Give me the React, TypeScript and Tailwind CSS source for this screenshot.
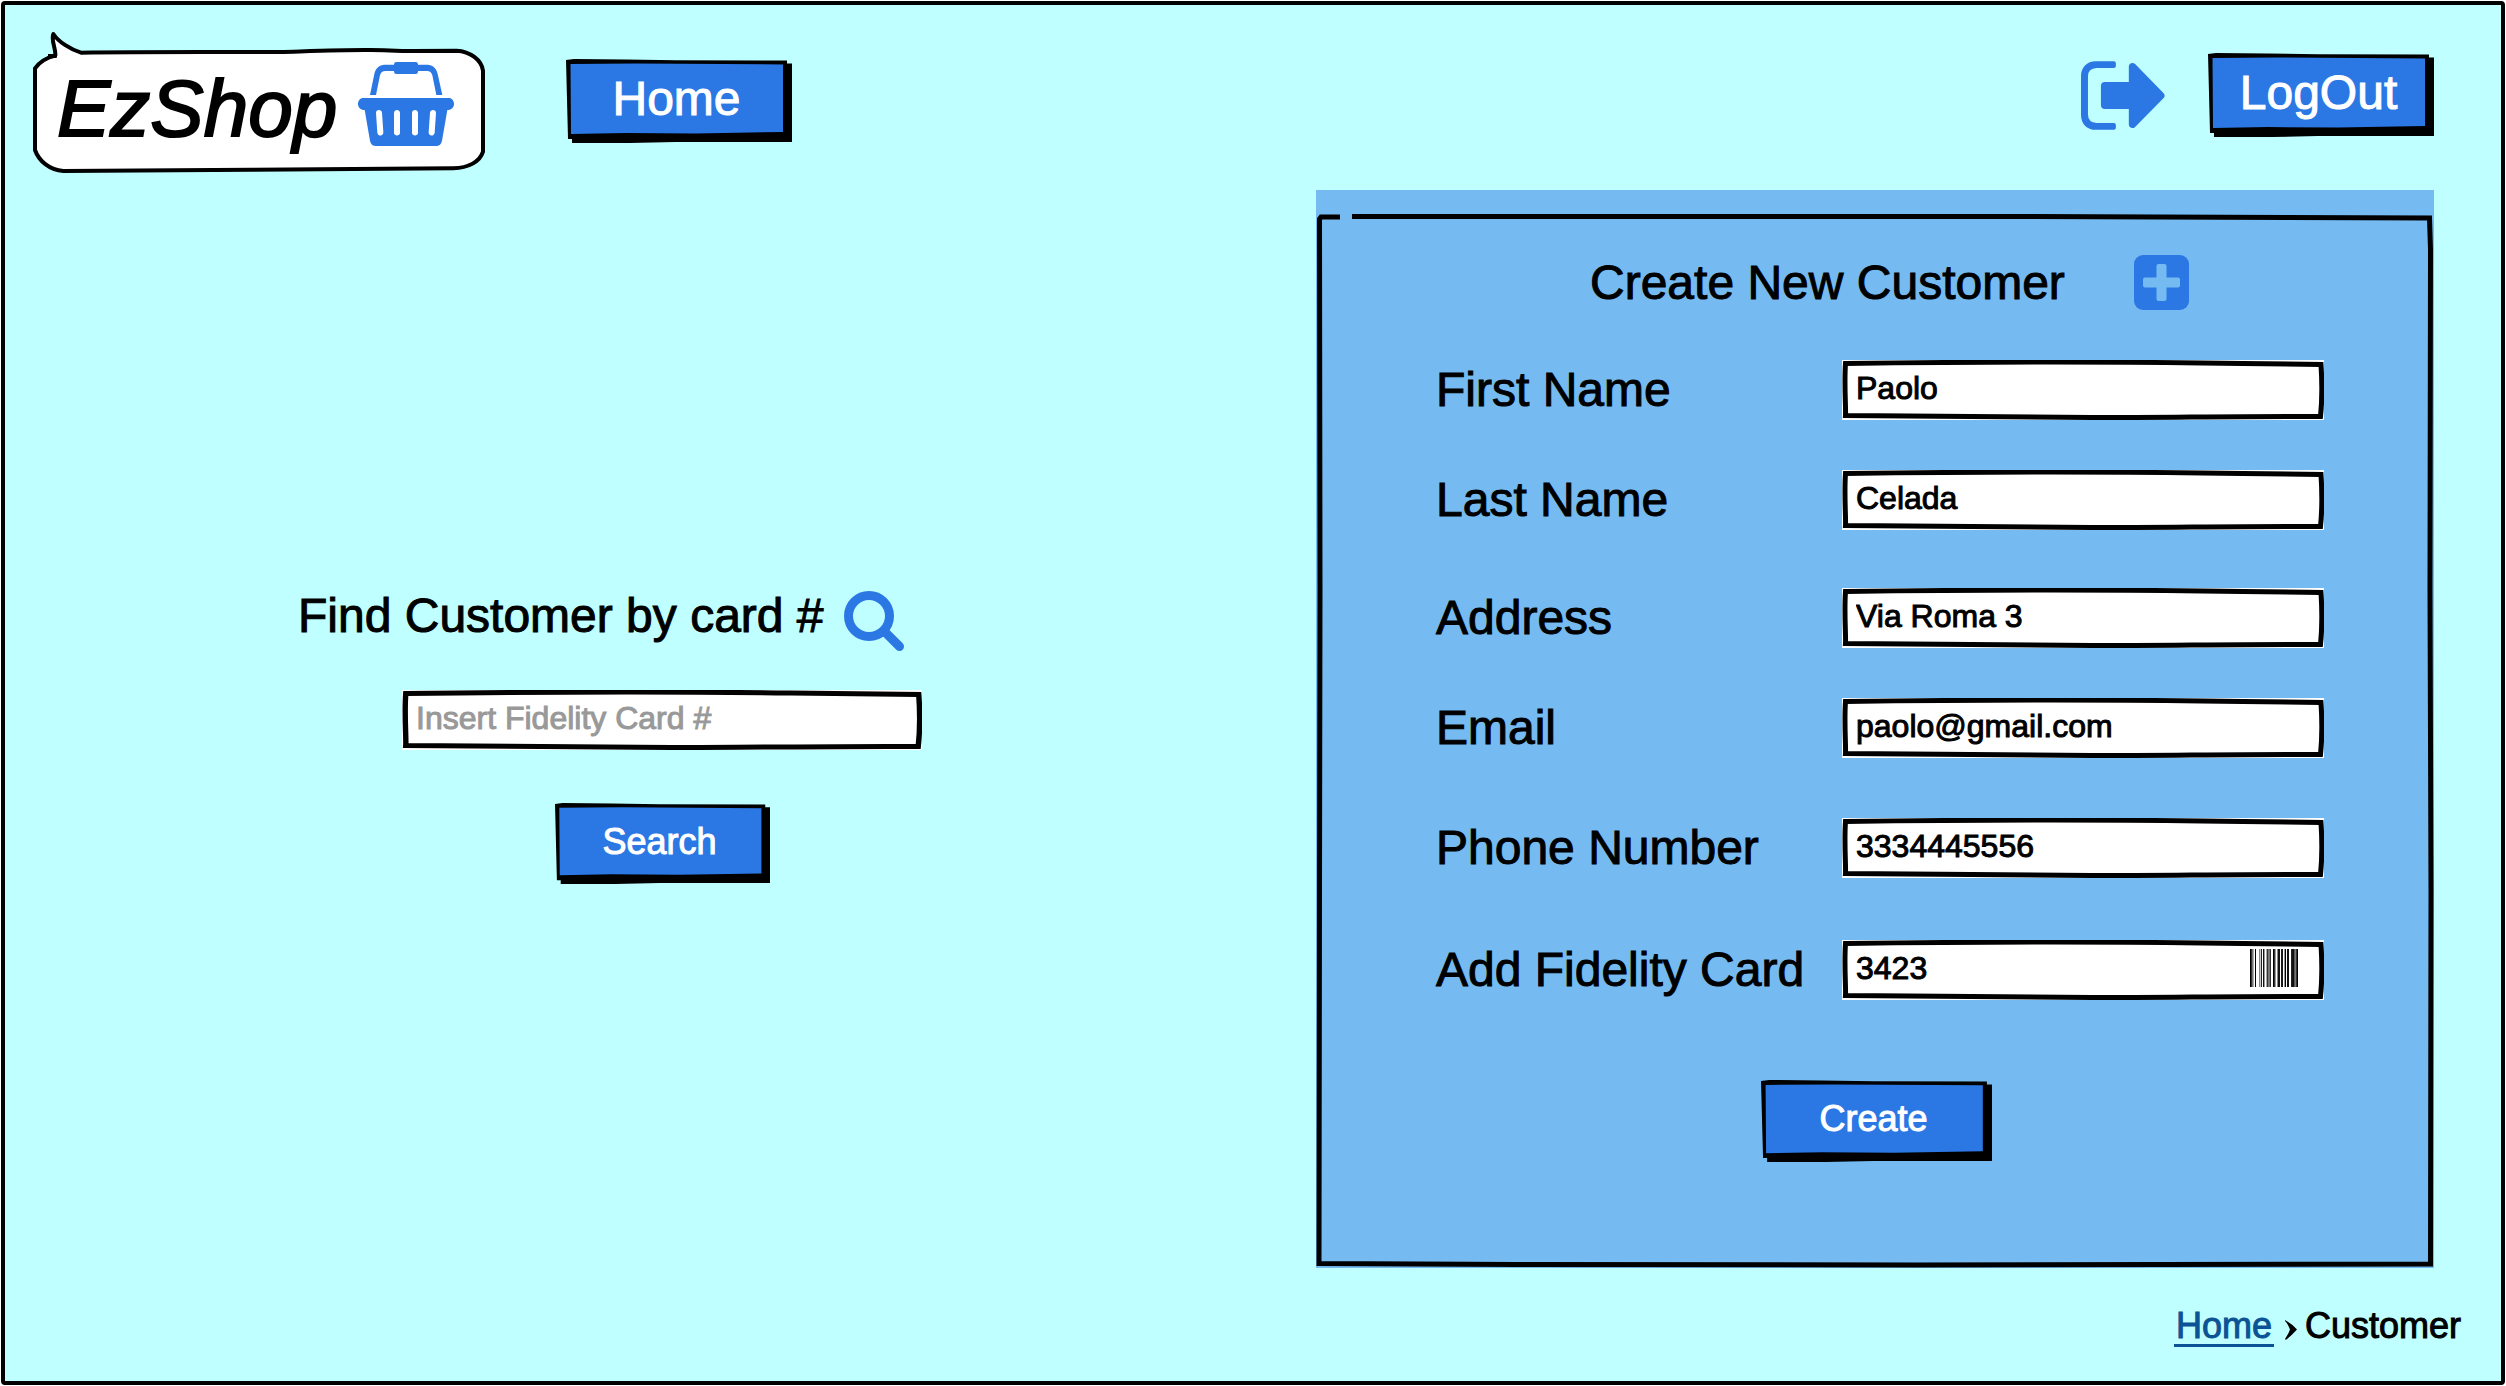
import React from 'react';

type FieldProps = {
  id: string;
  label: string;
  value: string;
  type: string;
  spacing: string;
  barcode?: boolean;
};

const FIELDS: FieldProps[] = [
  { id: 'first-name', label: 'First Name', value: 'Paolo', type: 'text', spacing: 'mt-[50px]' },
  { id: 'last-name', label: 'Last Name', value: 'Celada', type: 'text', spacing: 'mt-[50px]' },
  { id: 'address', label: 'Address', value: 'Via Roma 3', type: 'text', spacing: 'mt-[58px]' },
  { id: 'email', label: 'Email', value: 'paolo@gmail.com', type: 'text', spacing: 'mt-[50px]' },
  { id: 'phone', label: 'Phone Number', value: '3334445556', type: 'tel', spacing: 'mt-[60px]' },
  { id: 'card', label: 'Add Fidelity Card', value: '3423', type: 'text', spacing: 'mt-[62px]', barcode: true },
];

/* Hand-drawn outline around a text box */
function InputOutline() {
  return (
    <svg
      className="pointer-events-none absolute inset-0 h-full w-full"
      viewBox="0 0 482 60"
      preserveAspectRatio="none"
      aria-hidden="true"
    >
      <path
        d="M3.500 3.500 C120 2 280 2 360 3 C400 3.500 450 4 479 4.500 C480 20 480 42 478.500 56.500 C400 56 330 57.500 250 57.500 C160 57.500 80 56 3.500 55.500 C4 48 2 24 3.500 3.500 Z"
        fill="none"
        stroke="#000"
        strokeWidth="5"
        strokeLinejoin="miter"
      />
    </svg>
  );
}

function TextBox({ id, barcode, ...rest }: { id: string; barcode?: boolean } & React.InputHTMLAttributes<HTMLInputElement>) {
  return (
    <div className="relative w-full">
      <input
        id={id}
        className="block h-[60px] w-full bg-white pr-4 pb-1 pl-[14px] text-[32px] text-black outline-none [-webkit-text-stroke:1px] placeholder:text-[#999999] placeholder:opacity-100"
        {...rest}
      />
      <InputOutline />
      {barcode && <Barcode />}
    </div>
  );
}

function Barcode() {
  const bars: [number, number, string][] = [
    [0, 1, '#000'], [1, 1, '#333'], [2, 1, '#777'], [3, 1, '#aaa'], [5, 1, '#000'],
    [9, 1, '#888'], [10, 1, '#ccc'], [11, 1, '#222'], [13, 1, '#111'], [14, 1, '#999'],
    [16, 1, '#aaa'], [17, 1, '#333'], [18, 2, '#777'], [20, 1, '#333'], [23, 1, '#000'],
    [24, 1, '#333'], [25, 1, '#999'], [27, 1, '#888'], [28, 2, '#111'], [31, 2, '#1a1a1a'],
    [34, 1, '#999'], [35, 1, '#000'], [37, 2, '#111'], [41, 1, '#222'], [42, 2, '#111'],
    [44, 1, '#555'], [45, 1, '#777'], [46, 1, '#333'], [47, 1, '#000'],
  ];
  return (
    <svg
      className="pointer-events-none absolute top-[9px] right-[26px] h-[38px] w-12"
      viewBox="0 0 48 38"
      shapeRendering="crispEdges"
      aria-hidden="true"
    >
      {bars.map(([x, w, c]) => (
        <rect key={x} x={x} y="0" width={w} height="38" fill={c} />
      ))}
    </svg>
  );
}

/* Blue button with an uneven ink outline and a hard drop shadow */
function SketchButton({ className, children, type = 'button' }: { className: string; children: React.ReactNode; type?: 'button' | 'submit' }) {
  return (
    <button type={type} className={`relative flex cursor-pointer items-center justify-center pr-[5px] pb-1 text-white [-webkit-text-stroke:1px] ${className}`}>
      <svg
        className="absolute inset-0 h-full w-full"
        viewBox="0 0 226 84"
        preserveAspectRatio="none"
        aria-hidden="true"
      >
        <polygon points="6,79 6,84.500 40,84.500 110,83 226,83 226,4.500 219,4.500 219,79" fill="#000" />
        <polygon points="0,1 8,0 60,0.500 110,1.200 221,1.500 221,80 2,80" fill="#000" />
        <polygon points="4.500,5 70,4.500 217,5.500 217,73 130,74.500 60,74 5,75" fill="#2b78e4" />
      </svg>
      <span className="relative">{children}</span>
    </button>
  );
}

function Logo() {
  return (
    <div className="relative flex h-[143px] w-[454px] items-center justify-between pt-[3px] pr-8 pl-[25px]">
      <svg className="absolute inset-0 h-full w-full" viewBox="36 33 1362 429" aria-hidden="true">
        <path
          d="M45 145 C56 130 76 114 106 107 C108 85 92 60 100 42 C115 65 150 88 183 98 C400 95 650 97 780 96 C880 93 980 89 1050 90 C1100 90 1120 93 1180 93 L1310 92 C1350 94 1385 120 1389 152 L1389 395 C1380 425 1345 444 1300 445 C1000 448 450 450 130 453 C88 450 56 422 45 390 Z"
          fill="#fff"
          stroke="#000"
          strokeWidth="12"
          strokeLinejoin="round"
        />
        <path d="M84 108 L110 108" stroke="#000" strokeWidth="12" />
      </svg>
      <span className="relative pt-[10px] text-[80px] leading-[80px] italic [-webkit-text-stroke:2px]">EzShop</span>
      <svg className="relative h-[84px] w-24" viewBox="1014 126 288 252" fill="#2b78e4" aria-hidden="true">
        <path d="M1122 134 H1092 C1074 136 1066 148 1063 162 L1050 225 H1068 L1080 166 C1082 157 1088 153 1096 153 H1122 Z" />
        <path d="M1194 134 H1224 C1242 136 1250 148 1253 162 L1267 225 H1249 L1237 166 C1235 157 1229 153 1221 153 H1194 Z" />
        <rect x="1122" y="126" width="72" height="36" rx="7" />
        <path
          fillRule="evenodd"
          d="M1030 234 H1286 C1296 234 1302 242 1302 252 C1302 262 1295 270 1282 270 L1266 362 C1264 372 1258 378 1248 378 H1068 C1058 378 1052 372 1050 362 L1034 270 C1021 270 1014 262 1014 252 C1014 242 1020 234 1030 234 Z M1068 279 L1072 338 C1074 350 1091 349 1090 337 L1086 278 C1085 267 1067 268 1068 279 Z M1122 279 V338 C1122 349 1140 349 1140 338 V279 C1140 267 1122 267 1122 279 Z M1176 279 V338 C1176 349 1194 349 1194 338 V279 C1194 267 1176 267 1176 279 Z M1230 278 L1226 337 C1225 349 1242 350 1244 338 L1248 279 C1249 268 1231 267 1230 278 Z"
        />
      </svg>
    </div>
  );
}

function LogoutIcon() {
  return (
    <svg className="h-[69px] w-[84px]" viewBox="123 126 253 207" fill="#2b78e4" aria-hidden="true">
      <path d="M168 126 H222 Q228 126 228 132 V141 Q228 147 222 147 H170 Q144 148 144 172 V287 Q144 311 170 312 H222 Q228 312 228 318 V327 Q228 333 222 333 H168 C140 333 123 314 123 288 V171 C123 145 140 126 168 126 Z" />
      <path d="M195 189 H267 V142 C267 132 279 128 286 135 L372 223 Q378 230 372 237 L286 324 C279 331 267 327 267 317 V270 H195 Q183 270 183 258 V201 Q183 189 195 189 Z" />
    </svg>
  );
}

export default function App() {
  return (
    <div className="min-h-screen bg-white p-[1px] font-['Liberation_Sans',Arial,sans-serif] text-black [-webkit-text-stroke:1px]">
      <div className="flex min-h-[calc(100vh-2px)] flex-col rounded-[4px] border-4 border-black bg-[#c0ffff]">
        <header className="flex items-start justify-between pt-[26px] pr-[67px] pb-4 pl-[27px]">
          <nav className="flex items-center gap-20">
            <Logo />
            <SketchButton className="mb-1 h-[84px] w-[226px] text-[48px] leading-none">Home</SketchButton>
          </nav>
          <div className="mt-[22px] flex items-center gap-[43px]">
            <LogoutIcon />
            <SketchButton className="h-[84px] w-[226px] text-[48px] leading-none">LogOut</SketchButton>
          </div>
        </header>

        <main className="grid flex-1 grid-cols-[1311fr_1118fr] pr-[67px]">
          <section className="flex flex-col justify-center pt-[17px] pl-[290px]">
            <form className="flex w-[627px] flex-col" onSubmit={(e) => e.preventDefault()}>
              <div className="flex h-[60px] items-center gap-5 pl-[3px]">
                <label htmlFor="find-card" className="pb-[10px] text-[48px] leading-none whitespace-nowrap">
                  Find Customer by card #
                </label>
                <svg className="size-[60px] shrink-0" viewBox="0 0 60 60" fill="none" stroke="#2b78e4" aria-hidden="true">
                  <circle cx="25" cy="25" r="20.500" strokeWidth="9" />
                  <path d="M41 41 L55.500 55.500" strokeWidth="9" strokeLinecap="round" />
                </svg>
              </div>
              <div className="mt-[39px] flex w-[520px] flex-col items-center self-end">
                <TextBox id="find-card" type="text" placeholder="Insert Fidelity Card #" />
                <SketchButton type="submit" className="mt-[53px] h-[81px] w-[215px] text-[36px] leading-none">
                  Search
                </SketchButton>
              </div>
            </form>
          </section>

          <section className="relative bg-[#75bbf2] pt-[65px] pr-[110px] pb-[106px] pl-[118px]">
            <svg
              className="pointer-events-none absolute inset-0 h-full w-full"
              viewBox="0 0 1118 1078"
              preserveAspectRatio="none"
              fill="none"
              stroke="#000"
              strokeWidth="5"
              aria-hidden="true"
            >
              <path d="M24 27 H5 L3.500 29 L4 400 L3.500 700 L3 1073.500 L200 1074.500 L600 1075 L1114.500 1074 L1115 700 L1114 400 L1114.500 60 L1113.500 28 L700 26.500 L36 26.500" />
            </svg>
            <div className="flex h-[55px] items-center gap-[69px] pl-[156px]">
              <h1 className="text-[48px] leading-none whitespace-nowrap">Create New Customer</h1>
              <svg className="size-[55px] shrink-0" viewBox="0 0 55 55" aria-hidden="true">
                <rect width="55" height="55" rx="9" fill="#2b78e4" />
                <rect x="22.500" y="9" width="10" height="37" rx="2" fill="#75bbf2" />
                <rect x="9" y="22.500" width="37" height="10" rx="2" fill="#75bbf2" />
              </svg>
            </div>
            <form onSubmit={(e) => e.preventDefault()}>
              {FIELDS.map((f) => (
                <div key={f.id} className={`grid grid-cols-[408fr_482fr] items-center ${f.spacing}`}>
                  <label htmlFor={f.id} className="pl-[2px] text-[48px] leading-none whitespace-nowrap">
                    {f.label}
                  </label>
                  <TextBox id={f.id} type={f.type} defaultValue={f.value} barcode={f.barcode} />
                </div>
              ))}
              <div className="mt-20 flex justify-center pr-[6px]">
                <SketchButton type="submit" className="h-[82px] w-[231px] text-[36px] leading-none">
                  Create
                </SketchButton>
              </div>
            </form>
          </section>
        </main>

        <footer className="flex justify-end pt-10 pr-10 pb-[34px] text-[36px] leading-9">
          <nav aria-label="Breadcrumb" className="flex items-start">
            <a href="#home" className="border-b-[3px] border-[#0b5394] px-[2px] text-[#0b5394]">
              Home
            </a>
            <svg className="mt-3 mr-2 ml-[11px] h-5 w-3" viewBox="0 0 12 20" aria-hidden="true">
              <path d="M0 0 Q7 4 12 9.500 Q7 15 1 20 L0 19 Q4 13 5 9.500 Q3 4 0 1 Z" fill="#000" />
            </svg>
            <span>Customer</span>
          </nav>
        </footer>
      </div>
    </div>
  );
}
